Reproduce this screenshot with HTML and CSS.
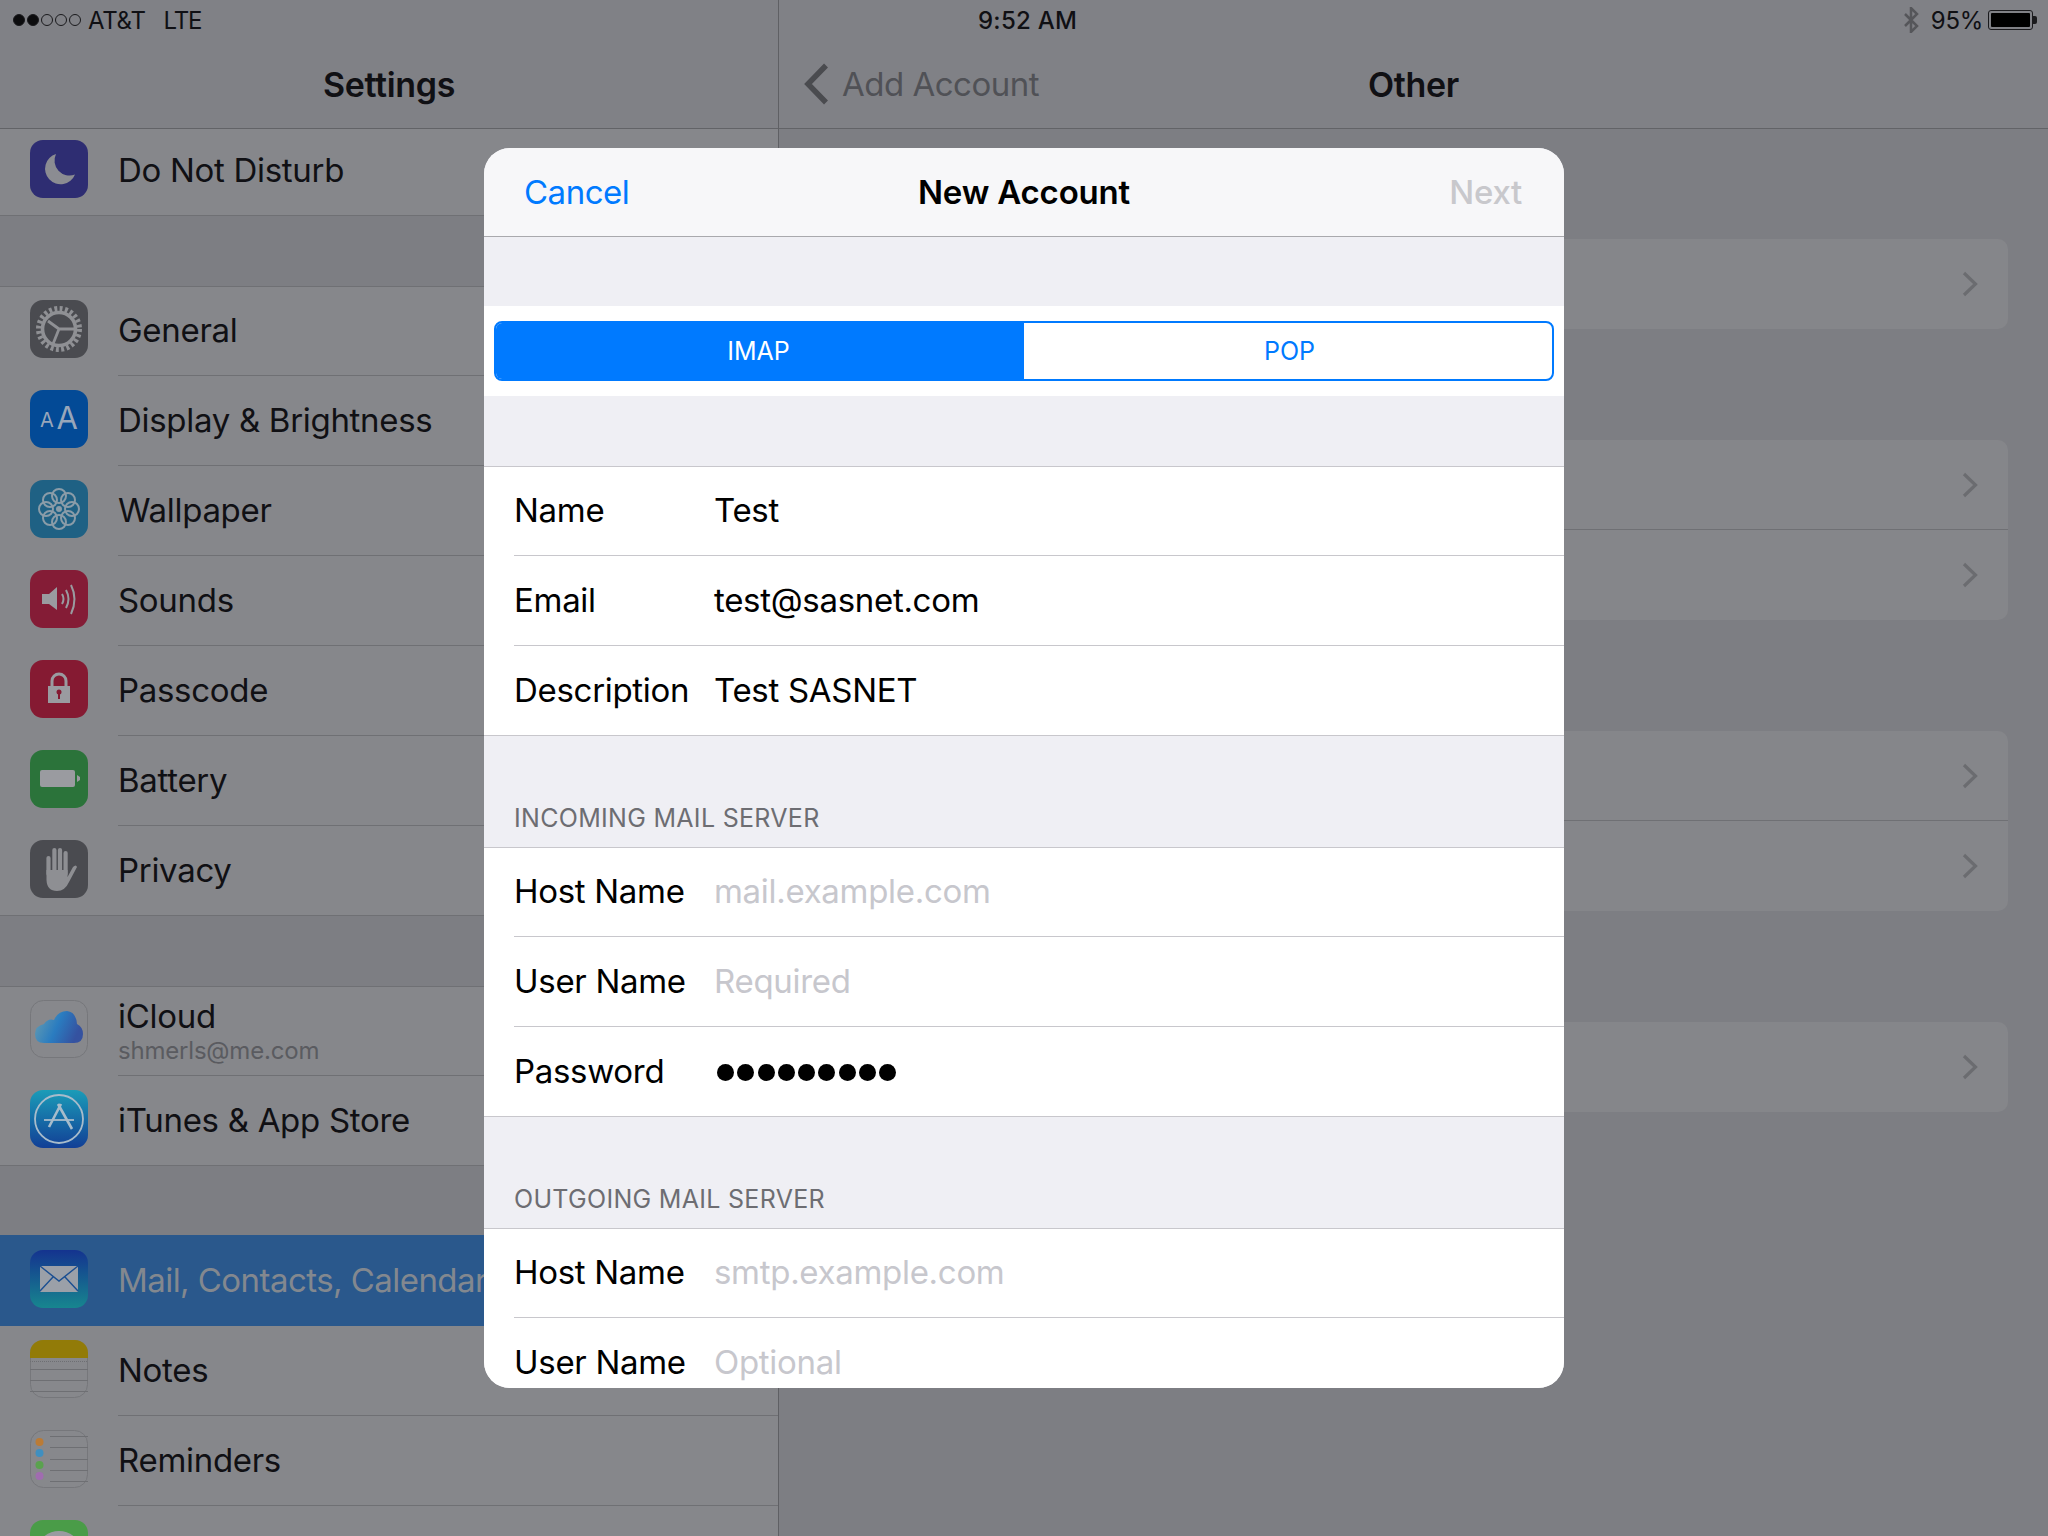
FILE: index.html
```html
<!DOCTYPE html>
<html lang="en">
<head>
<meta charset="utf-8">
<title>New Account</title>
<link rel="stylesheet" href="styles.css">
</head>
<body>
<div class="ipad">
  <aside class="master">
    <header class="nav"><h1 class="nav-title">Settings</h1></header>
    <div class="group group-scrolled">
      <div class="row row-scrolled">
        <svg class="ic" viewBox="0 0 58 58"><rect width="58" height="58" rx="13" fill="#2e2d72"/><path d="M26 14A15.500 15.500 0 1 0 45 34.500 15 15 0 0 1 26 14Z" fill="#8b8c92"/></svg>
        <div class="row-body row-body-last"><span>Do Not Disturb</span></div>
      </div>
    </div>
    <div class="group">
      <div class="row">
        <svg class="ic" viewBox="0 0 58 58"><rect width="58" height="58" rx="13" fill="#4a4b50"/><circle cx="29" cy="29" r="20.500" fill="none" stroke="#8f9094" stroke-width="5" stroke-dasharray="2.900 2.470"/><circle cx="29" cy="29" r="16.500" fill="none" stroke="#8f9094" stroke-width="3.600"/><path d="M29 29L18 21M29 29H45M29 29L23 44" fill="none" stroke="#8f9094" stroke-width="2.800"/></svg>
        <div class="row-body"><span>General</span></div>
      </div>
      <div class="row">
        <svg class="ic" viewBox="0 0 58 58"><rect width="58" height="58" rx="13" fill="#034a96"/><text class="ic-text ic-small" x="10" y="37">A</text><text class="ic-text ic-large" x="26.500" y="39">A</text></svg>
        <div class="row-body"><span>Display &amp; Brightness</span></div>
      </div>
      <div class="row">
        <svg class="ic" viewBox="0 0 58 58"><rect width="58" height="58" rx="13" fill="#1f6184"/><g fill="none" stroke="#8a9ca8" stroke-width="2"><circle cx="29" cy="16" r="7"/><circle cx="29" cy="42" r="7"/><circle cx="16" cy="29" r="7"/><circle cx="42" cy="29" r="7"/><circle cx="20" cy="20" r="7"/><circle cx="38" cy="20" r="7"/><circle cx="20" cy="38" r="7"/><circle cx="38" cy="38" r="7"/></g><circle cx="29" cy="29" r="3" fill="#8a9ca8"/></svg>
        <div class="row-body"><span>Wallpaper</span></div>
      </div>
      <div class="row">
        <svg class="ic" viewBox="0 0 58 58"><rect width="58" height="58" rx="13" fill="#841c36"/><path d="M12 24H19L27 17V40L19 34H12Z" fill="#9a9ba0"/><path d="M32 24Q35 29 32 34M36 20Q41 29 36 38M41 15Q48 29 41 44" fill="none" stroke="#9a9ba0" stroke-width="2"/></svg>
        <div class="row-body"><span>Sounds</span></div>
      </div>
      <div class="row">
        <svg class="ic" viewBox="0 0 58 58"><rect width="58" height="58" rx="13" fill="#851a32"/><path d="M22 26V21A7 7 0 0 1 36 21V26" fill="none" stroke="#9a9ba0" stroke-width="3"/><rect x="18" y="26" width="22" height="17" fill="#9a9ba0"/><circle cx="29" cy="32" r="2.500" fill="#851a32"/><rect x="28" y="32" width="2" height="7" fill="#851a32"/></svg>
        <div class="row-body"><span>Passcode</span></div>
      </div>
      <div class="row">
        <svg class="ic" viewBox="0 0 58 58"><rect width="58" height="58" rx="13" fill="#2b733a"/><rect x="10" y="20" width="35" height="17" rx="2" fill="#9a9ba0"/><path d="M47 25L50 27V30L47 32Z" fill="#9a9ba0"/></svg>
        <div class="row-body"><span>Battery</span></div>
      </div>
      <div class="row">
        <svg class="ic" viewBox="0 0 58 58"><rect width="58" height="58" rx="13" fill="#4a4b50"/><g fill="none" stroke="#8e8f93" stroke-width="4.200" stroke-linecap="round"><path d="M18.500 18V34"/><path d="M24.400 10V32"/><path d="M30 10V32"/><path d="M35.600 13V34"/></g><path d="M16.500 30H37.500V37L43 27Q46 24 47 27L39 42Q35 51 27 51Q17 51 16.500 40Z" fill="#8e8f93"/></svg>
        <div class="row-body row-body-last"><span>Privacy</span></div>
      </div>
    </div>
    <div class="group">
      <div class="row">
        <svg class="ic ic-tall" viewBox="0 0 58 58"><defs><linearGradient id="cloud" x1="0" y1="0" x2="1" y2="0.300"><stop offset="0" stop-color="#6a9fb0"/><stop offset="0.550" stop-color="#2a7cc0"/><stop offset="1" stop-color="#3552a0"/></linearGradient></defs><rect x="0.500" y="0.500" width="57" height="57" rx="13" fill="#87888c" stroke="#76777b"/><path d="M14 43Q5 43 5 34Q5 26 14 24Q18 18 24 20Q28 11 37 11Q46 12 47 24Q53 27 53 34Q53 43 44 43Z" fill="url(#cloud)"/></svg>
        <div class="row-body row-body-stack"><span>iCloud</span><span class="row-sub">shmerls@me.com</span></div>
      </div>
      <div class="row">
        <svg class="ic" viewBox="0 0 58 58"><defs><linearGradient id="store" x1="0" y1="0" x2="0" y2="1"><stop offset="0" stop-color="#1b9cb8"/><stop offset="1" stop-color="#123f96"/></linearGradient></defs><rect width="58" height="58" rx="13" fill="url(#store)"/><circle cx="29" cy="29" r="24" fill="none" stroke="#a8bccb" stroke-width="1.800"/><path d="M31 14L19 37M28 14L42 39" fill="none" stroke="#a8bccb" stroke-width="2.600"/><path d="M14 30H44" fill="none" stroke="#a8bccb" stroke-width="1.800"/></svg>
        <div class="row-body row-body-last"><span>iTunes &amp; App Store</span></div>
      </div>
    </div>
    <div class="group">
      <div class="row row-selected">
        <svg class="ic" viewBox="0 0 58 58"><defs><linearGradient id="mail" x1="0" y1="0" x2="0" y2="1"><stop offset="0" stop-color="#14338f"/><stop offset="1" stop-color="#17868f"/></linearGradient></defs><rect width="58" height="58" rx="13" fill="url(#mail)"/><rect x="10" y="16" width="38" height="26" rx="1" fill="#9ba0a8"/><path d="M10 16L29 31L48 16M10 41L23 27M48 41L35 27" fill="none" stroke="#1b4f92" stroke-width="1.400"/></svg>
        <div class="row-body row-body-last"><span class="row-selected-text">Mail, Contacts, Calendars</span></div>
      </div>
      <div class="row">
        <svg class="ic" viewBox="0 0 58 58"><rect x="0.500" y="0.500" width="57" height="57" rx="13" fill="#87888c" stroke="#76777b"/><path d="M0 18V13A13 13 0 0 1 13 0H45A13 13 0 0 1 58 13V18Z" fill="#927b08"/><path d="M0 21.500H58" stroke="#6e6f73" stroke-dasharray="1 1"/><path d="M0 29.500H58M0 40.500H58M0 51.500H58" stroke="#6e6f73"/></svg>
        <div class="row-body"><span>Notes</span></div>
      </div>
      <div class="row">
        <svg class="ic" viewBox="0 0 58 58"><rect x="0.500" y="0.500" width="57" height="57" rx="13" fill="#87888c" stroke="#76777b"/><circle cx="9.500" cy="12" r="4" fill="#bb7b35"/><circle cx="9.500" cy="23" r="4" fill="#3f8fc0"/><circle cx="9.500" cy="35" r="4" fill="#5aa24e"/><circle cx="9.500" cy="46" r="4" fill="#a06cb0"/><path d="M20 6.500H58M20 17.500H58M20 29.500H58M20 40.500H58M20 51.500H58" stroke="#6e6f73"/></svg>
        <div class="row-body"><span>Reminders</span></div>
      </div>
      <div class="row">
        <svg class="ic" viewBox="0 0 58 58"><rect width="58" height="58" rx="13" fill="#4a9c48"/><ellipse cx="29" cy="27" rx="20" ry="16" fill="#9a9ba0"/></svg>
        <div class="row-body"></div>
      </div>
    </div>
  </aside>
  <main class="detail">
    <header class="nav nav-detail">
      <div class="nav-back">
        <svg class="back-chevron" viewBox="0 0 25 42"><path d="M22 2.500L4 21L22 39.500" fill="none" stroke="#4a4b4f" stroke-width="5.500"/></svg>
        <span>Add Account</span>
      </div>
      <h2 class="nav-title">Other</h2>
    </header>
    <div class="cards">
      <div class="card"><div class="card-row"><svg class="chev" viewBox="0 0 16 26"><path d="M2 2L13.500 13L2 24" fill="none" stroke="#6b6c70" stroke-width="3.200"/></svg></div></div>
      <div class="card"><div class="card-row"><svg class="chev" viewBox="0 0 16 26"><path d="M2 2L13.500 13L2 24" fill="none" stroke="#6b6c70" stroke-width="3.200"/></svg></div><div class="card-row"><svg class="chev" viewBox="0 0 16 26"><path d="M2 2L13.500 13L2 24" fill="none" stroke="#6b6c70" stroke-width="3.200"/></svg></div></div>
      <div class="card"><div class="card-row"><svg class="chev" viewBox="0 0 16 26"><path d="M2 2L13.500 13L2 24" fill="none" stroke="#6b6c70" stroke-width="3.200"/></svg></div><div class="card-row"><svg class="chev" viewBox="0 0 16 26"><path d="M2 2L13.500 13L2 24" fill="none" stroke="#6b6c70" stroke-width="3.200"/></svg></div></div>
      <div class="card"><div class="card-row"><svg class="chev" viewBox="0 0 16 26"><path d="M2 2L13.500 13L2 24" fill="none" stroke="#6b6c70" stroke-width="3.200"/></svg></div></div>
    </div>
  </main>

  <div class="status">
    <div class="status-left">
      <span class="signal"><i class="dot dot-on"></i><i class="dot dot-on"></i><i class="dot"></i><i class="dot"></i><i class="dot"></i></span>
      <span>AT&amp;T</span>
      <span class="status-lte">LTE</span>
    </div>
    <div class="status-time">9:52 AM</div>
    <div class="status-right">
      <svg class="bt" viewBox="0 0 16 26"><path d="M2 7L14 19L8 25V1L14 7L2 19" fill="none" stroke="#55565a" stroke-width="2.500"/></svg>
      <span>95%</span>
      <span class="batt"><span class="batt-fill"></span></span><span class="batt-nub"></span>
    </div>
  </div>

  <section class="modal">
    <header class="modal-nav">
      <span class="modal-cancel">Cancel</span>
      <span class="modal-title">New Account</span>
      <span class="modal-next">Next</span>
    </header>
    <div class="seg-band">
      <div class="seg">
        <span class="seg-item seg-on">IMAP</span>
        <span class="seg-item seg-off">POP</span>
      </div>
    </div>
    <div class="form-group form-first">
      <div class="f-row"><div class="f-body"><span class="f-label">Name</span><span>Test</span></div></div>
      <div class="f-row"><div class="f-body"><span class="f-label">Email</span><span>test@sasnet.com</span></div></div>
      <div class="f-row"><div class="f-body f-last"><span class="f-label">Description</span><span>Test SASNET</span></div></div>
    </div>
    <div class="f-header">INCOMING MAIL SERVER</div>
    <div class="form-group">
      <div class="f-row"><div class="f-body"><span class="f-label">Host Name</span><span class="ph">mail.example.com</span></div></div>
      <div class="f-row"><div class="f-body"><span class="f-label">User Name</span><span class="ph">Required</span></div></div>
      <div class="f-row"><div class="f-body f-last"><span class="f-label">Password</span><span class="pw"><i></i><i></i><i></i><i></i><i></i><i></i><i></i><i></i><i></i></span></div></div>
    </div>
    <div class="f-header">OUTGOING MAIL SERVER</div>
    <div class="form-group">
      <div class="f-row"><div class="f-body"><span class="f-label">Host Name</span><span class="ph">smtp.example.com</span></div></div>
      <div class="f-row"><div class="f-body"><span class="f-label">User Name</span><span class="ph">Optional</span></div></div>
    </div>
  </section>
</div>
</body>
</html>
```
FILE: styles.css
```css
* { box-sizing: border-box; margin: 0; padding: 0; }
html, body { width: 2048px; height: 1536px; overflow: hidden; }
body { font-family: Inter, "Liberation Sans", sans-serif; color: #101014; }

.ipad { position: relative; display: flex; width: 2048px; height: 1536px; overflow: hidden; background: #7d7e83; font-size: 33px; letter-spacing: -0.3px; }

/* master column */
.master { width: 779px; height: 1536px; flex: none; border-right: 1px solid #5f6064; overflow: hidden; }
.detail { flex: 1; min-width: 0; }

.nav { display: flex; align-items: center; justify-content: center; height: 129px; padding-top: 40px; background: #808186; border-bottom: 1px solid #626367; position: relative; }
.nav-title { font-size: 34px; font-weight: 600; letter-spacing: -0.35px; }
.nav-detail { position: relative; }
.nav-back { position: absolute; left: 25px; top: 63px; display: flex; align-items: center; gap: 13px; color: #505156; height: 42px; letter-spacing: -0.5px; }
.back-chevron { width: 25px; height: 42px; display: block; }

.group { margin-bottom: 70px; background: #86878b; box-shadow: inset 0 1px #6f7074, inset 0 -1px #6f7074; }
.group:nth-of-type(1) { box-shadow: inset 0 -1px #6f7074; }
.row { display: flex; height: 90px; padding-left: 30px; }
.ic { width: 58px; height: 58px; flex: none; margin-top: 14px; display: block; }
.row-body { flex: 1; min-width: 0; margin-left: 30px; padding-bottom: 2px; display: flex; align-items: center; border-bottom: 1px solid #6f7074; white-space: nowrap; overflow: hidden; }
.row-body-last { border-bottom: 0; }
.row-body-stack { flex-direction: column; align-items: flex-start; justify-content: center; padding-bottom: 0; }
.row-sub { font-size: 24px; color: #5a5b60; letter-spacing: -0.2px; }
.row-scrolled { height: 87px; }
.row-scrolled .ic { margin-top: 11px; }
.row-scrolled .row-body { padding-bottom: 5px; }
.row-selected { background: #2a588c; height: 91px; margin-top: -1px; padding-top: 1px; }
.row-selected-text { color: #83888f; letter-spacing: -0.55px; }
.ic-text { font-family: Inter, "Liberation Sans", sans-serif; fill: #98a6ba; letter-spacing: 0; }
.ic-small { font-size: 20px; }
.ic-large { font-size: 31px; }

/* detail cards */
.cards { padding: 110px 40px 0; display: flex; flex-direction: column; gap: 111px; }
.card { background: #85868a; border-radius: 10px; }
.card-row { height: 90px; display: flex; align-items: center; justify-content: flex-end; padding-right: 30px; border-bottom: 1px solid #6f7074; }
.card-row:last-child { border-bottom: 0; }
.chev { width: 16px; height: 26px; display: block; }

/* status bar */
.status { position: absolute; left: 0; top: 0; width: 2048px; height: 40px; display: flex; align-items: center; justify-content: space-between; padding: 0 11px 0 13px; font-size: 24px; letter-spacing: -0.3px; color: #101014; }
.status-left { display: flex; align-items: center; gap: 8px; width: 300px; }
.status-lte { margin-left: 10px; letter-spacing: -1.2px; }
.signal { display: flex; gap: 2px; margin-right: -1px; }
.dot { width: 12px; height: 12px; border: 1px solid #1a1a1d; border-radius: 50%; display: block; }
.dot-on { background: #0c0c0e; }
.status-time { font-weight: 500; position: absolute; left: 978px; letter-spacing: 0.25px; }
.status-right { display: flex; align-items: center; }
.bt { width: 16px; height: 26px; display: block; margin-right: 12px; }
.batt { width: 45px; height: 20px; margin-left: 5px; border: 1px solid #1a1a1d; border-radius: 3px; padding: 2px; display: block; }
.batt-fill { display: block; height: 100%; background: #000; border-radius: 1px; }
.batt-nub { width: 4px; height: 8px; background: #1a1a1d; border-radius: 0 2px 2px 0; display: block; }

/* modal sheet */
.modal { position: absolute; left: 484px; top: 148px; width: 1080px; height: 1240px; border-radius: 26px; overflow: hidden; background: #efeff4; color: #000; }
.modal-nav { position: relative; height: 89px; background: #f7f7f9; border-bottom: 1px solid #a9a9ad; display: flex; align-items: center; justify-content: space-between; padding: 0 42px 0 40px; }
.modal-cancel { color: #007aff; letter-spacing: -0.5px; }
.modal-title { font-weight: 600; position: absolute; left: 0; right: 0; text-align: center; letter-spacing: -0.2px; }
.modal-next { color: #c8c8cc; font-weight: 500; }
.seg-band { margin-top: 69px; height: 90px; background: #fff; display: flex; align-items: center; padding: 0 10px; }
.seg { flex: 1; height: 60px; display: flex; border: 2px solid #007aff; border-radius: 8px; overflow: hidden; font-size: 25px; letter-spacing: 0; color: #007aff; }
.seg-item { flex: 1 1 0; display: flex; align-items: center; justify-content: center; }
.seg-on { background: #007aff; color: #fff; padding-right: 3px; }
.seg-off { padding-left: 3px; }
.form-group { background: #fff; box-shadow: inset 0 1px #c8c7cc, inset 0 -1px #c8c7cc; }
.form-first { margin-top: 70px; }
.f-row { height: 90px; padding-left: 30px; }
.f-body { height: 90px; padding-bottom: 2px; display: flex; align-items: center; border-bottom: 1px solid #c8c7cc; }
.f-last { border-bottom: 0; }
.f-label { width: 200px; flex: none; }
.ph { color: #c7c7cd; }
.pw { display: flex; gap: 3.250px; padding-left: 3px; margin-top: 2px; }
.pw i { display: block; width: 17px; height: 17px; border-radius: 50%; background: #000; }
.f-header { height: 111px; display: flex; align-items: flex-end; padding: 0 0 14px 30px; font-size: 25px; letter-spacing: 0.3px; color: #6d6d72; }
```
